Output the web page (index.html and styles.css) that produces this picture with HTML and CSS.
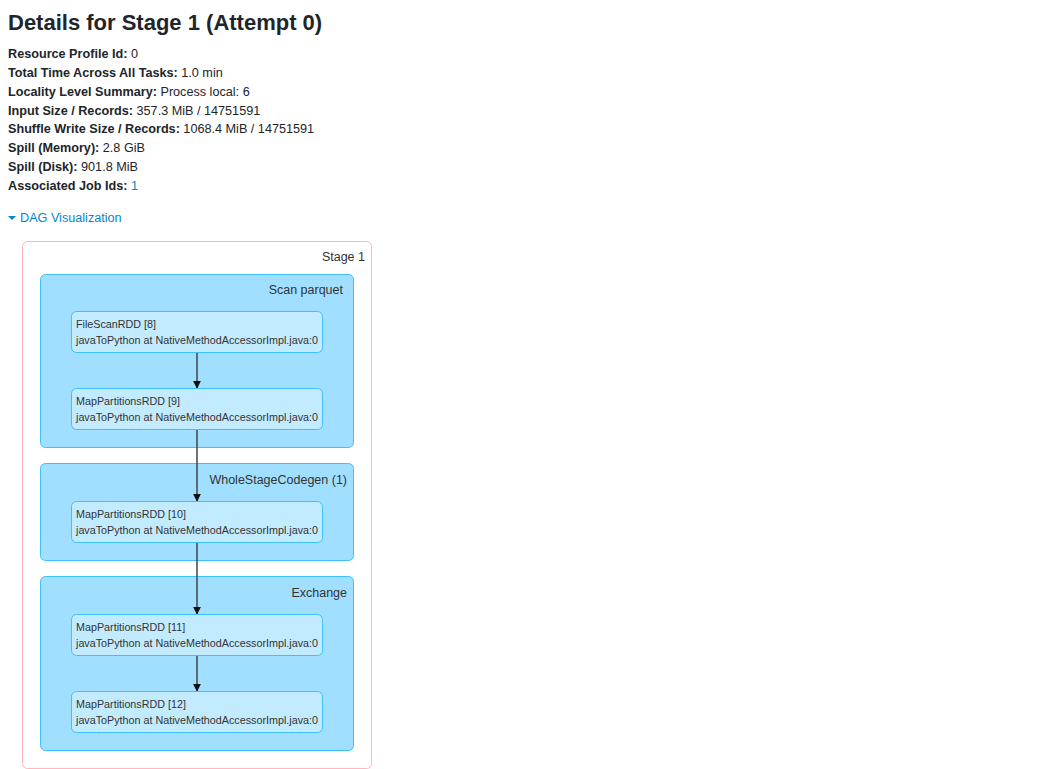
FILE: index.html
```html
<!DOCTYPE html>
<html>
<head>
<meta charset="utf-8">
<link rel="stylesheet" href="styles.css">
</head>
<body>
<div class="page">
  <h3 class="title">Details for Stage 1 (Attempt 0)</h3>
  <ul class="summary">
    <li><strong>Resource Profile Id:</strong> 0</li>
    <li><strong>Total Time Across All Tasks:</strong> 1.0 min</li>
    <li><strong>Locality Level Summary:</strong> Process local: 6</li>
    <li><strong>Input Size / Records:</strong> 357.3 MiB / 14751591</li>
    <li><strong>Shuffle Write Size / Records:</strong> 1068.4 MiB / 14751591</li>
    <li><strong>Spill (Memory):</strong> 2.8 GiB</li>
    <li><strong>Spill (Disk):</strong> 901.8 MiB</li>
    <li><strong>Associated Job Ids:</strong> <a class="link" href="#">1</a></li>
  </ul>
  <div class="dag-toggle"><span class="caret"></span><a class="link" href="#">DAG Visualization</a></div>
  <svg class="dag" width="352" height="530" viewBox="21 240 352 530" xmlns="http://www.w3.org/2000/svg">
    <defs>
      <marker id="arrow" viewBox="0 0 10 10" refX="9" refY="5" markerWidth="8" markerHeight="8" orient="auto" markerUnits="userSpaceOnUse">
        <path d="M0,0 L10,5 L0,10 z" class="arrowhead"/>
      </marker>
    </defs>
    <rect class="stage" x="22.5" y="241.5" width="349" height="527" rx="5" ry="5"/>
    <text class="stage-label" x="365" y="261" text-anchor="end">Stage 1</text>

    <rect class="cluster" x="40.5" y="274.5" width="313" height="173" rx="5" ry="5"/>
    <text class="cluster-label" x="343" y="294" text-anchor="end">Scan parquet</text>

    <rect class="cluster" x="40.5" y="463.5" width="313" height="97" rx="5" ry="5"/>
    <text class="cluster-label" x="347" y="484" text-anchor="end">WholeStageCodegen (1)</text>

    <rect class="cluster" x="40.5" y="576.5" width="313" height="174" rx="5" ry="5"/>
    <text class="cluster-label" x="347" y="597" text-anchor="end">Exchange</text>

    <line class="edge" x1="197" y1="352" x2="197" y2="388" marker-end="url(#arrow)"/>
    <line class="edge" x1="197" y1="429" x2="197" y2="501" marker-end="url(#arrow)"/>
    <line class="edge" x1="197" y1="542" x2="197" y2="614" marker-end="url(#arrow)"/>
    <line class="edge" x1="197" y1="655" x2="197" y2="691" marker-end="url(#arrow)"/>

    <rect class="node" x="71.5" y="311.5" width="251" height="41" rx="5" ry="5"/>
    <text class="node-label" x="76" y="328">FileScanRDD [8]</text>
    <text class="node-label" x="76" y="344">javaToPython at NativeMethodAccessorImpl.java:0</text>

    <rect class="node" x="71.5" y="388.5" width="251" height="41" rx="5" ry="5"/>
    <text class="node-label" x="76" y="405">MapPartitionsRDD [9]</text>
    <text class="node-label" x="76" y="421">javaToPython at NativeMethodAccessorImpl.java:0</text>

    <rect class="node" x="71.5" y="501.5" width="251" height="41" rx="5" ry="5"/>
    <text class="node-label" x="76" y="518">MapPartitionsRDD [10]</text>
    <text class="node-label" x="76" y="534">javaToPython at NativeMethodAccessorImpl.java:0</text>

    <rect class="node" x="71.5" y="614.5" width="251" height="41" rx="5" ry="5"/>
    <text class="node-label" x="76" y="631">MapPartitionsRDD [11]</text>
    <text class="node-label" x="76" y="647">javaToPython at NativeMethodAccessorImpl.java:0</text>

    <rect class="node" x="71.5" y="691.5" width="251" height="41" rx="5" ry="5"/>
    <text class="node-label" x="76" y="708">MapPartitionsRDD [12]</text>
    <text class="node-label" x="76" y="724">javaToPython at NativeMethodAccessorImpl.java:0</text>
  </svg>
</div>
</body>
</html>
```

FILE: styles.css
```css
html, body {
  margin: 0;
  padding: 0;
  background: #ffffff;
}

body {
  font-family: "Liberation Sans", Arial, Helvetica, sans-serif;
  color: #212529;
  font-size: 12.65px;
}

.page {
  padding: 8px 8px 0 8px;
}

.title {
  margin: 0 0 8px 0;
  font-size: 22px;
  line-height: 29px;
  font-weight: bold;
}

.summary {
  list-style: none;
  margin: 0;
  padding: 0;
}

.summary li {
  line-height: 18.86px;
}

.summary strong {
  font-weight: bold;
}

.link {
  color: #0088cc;
  text-decoration: none;
}

.dag-toggle {
  margin-top: 13px;
  display: flex;
  align-items: center;
  line-height: 18px;
}

.caret {
  display: inline-block;
  width: 0;
  height: 0;
  border-left: 4px solid transparent;
  border-right: 4px solid transparent;
  border-top: 4px solid #0088cc;
  margin-right: 4px;
}

.dag {
  display: block;
  margin: 13px 0 0 13px;
}

.stage {
  fill: #ffffff;
  stroke: #ffb6c1;
  stroke-width: 1px;
}

.cluster {
  fill: #a0dfff;
  stroke: #3ec0ff;
  stroke-width: 1px;
}

.node {
  fill: #c3ebff;
  stroke: #3ec0ff;
  stroke-width: 1px;
}

.edge {
  stroke: #444444;
  stroke-width: 1.5px;
}

.arrowhead {
  fill: #111111;
}

.stage-label,
.cluster-label {
  font-family: "Liberation Sans", Arial, sans-serif;
  font-size: 12.5px;
  fill: #333333;
}

.node-label {
  font-family: "Liberation Sans", Arial, sans-serif;
  font-size: 10.75px;
  fill: #333333;
}
```
